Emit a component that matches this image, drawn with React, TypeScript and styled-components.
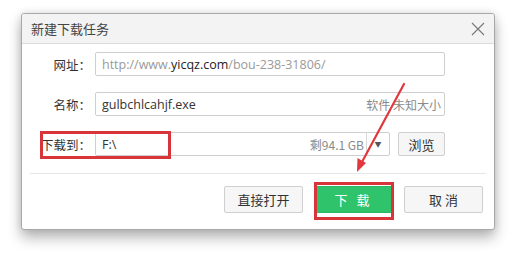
import React from 'react';
import styled, { createGlobalStyle } from 'styled-components';

const GlobalStyle = createGlobalStyle`
  html, body {
    margin: 0;
    padding: 0;
    background: #ffffff;
  }
  body {
    font-family: 'Open Sans', 'Noto Sans CJK SC', sans-serif;
    font-size: 13px;
    color: #333;
  }
`;

const Page = styled.div`
  position: relative;
  width: 515px;
  height: 258px;
  padding: 13px 0 0 21px;
  box-sizing: border-box;
  overflow: hidden;
`;

const Dialog = styled.div`
  width: 474px;
  height: 217px;
  box-sizing: border-box;
  background: #fff;
  border: 1px solid #a8a8a8;
  border-radius: 3px;
  box-shadow: 0 8px 14px rgba(0, 0, 0, 0.28), 0 0 8px rgba(0, 0, 0, 0.12);
  display: flex;
  flex-direction: column;
`;

const Header = styled.div`
  height: 30px;
  box-sizing: border-box;
  background: #f3f3f3;
  border-bottom: 1px solid #dcdcdc;
  border-radius: 3px 3px 0 0;
  display: flex;
  align-items: center;
  justify-content: space-between;
  padding: 0 9px 0 9px;
`;

const Title = styled.span`
  font-family: 'Noto Sans CJK SC', sans-serif;
  font-size: 13px;
  color: #444;
`;

const Close = styled.div`
  width: 14px;
  height: 14px;
  display: flex;
  align-items: center;
  justify-content: center;
`;

const Form = styled.div`
  display: flex;
  flex-direction: column;
  gap: 16px;
  padding-top: 8px;
`;

const Row = styled.div`
  display: flex;
  align-items: center;
  height: 24px;
`;

const Label = styled.div`
  width: 65px;
  margin-right: 8px;
  text-align: right;
  white-space: nowrap;
  font-family: 'Noto Sans CJK SC', sans-serif;
  font-size: 12.5px;
  color: #333;
`;

const Colon = styled.span`
  letter-spacing: -4px;
`;

const Field = styled.div<{ $width: number }>`
  width: ${(p) => p.$width}px;
  height: 24px;
  box-sizing: border-box;
  border: 1px solid #cfcfcf;
  border-radius: 2px;
  display: flex;
  align-items: center;
  padding: 0 3px 0 6px;
  background: #fff;
  font-family: 'Open Sans', 'Noto Sans CJK SC', sans-serif;
  font-size: 12.5px;
  color: #333;
`;

const Grow = styled.span`
  flex: 1;
  white-space: nowrap;
  overflow: hidden;
`;

const Muted = styled.span`
  color: #9a9a9a;
`;

const Dark = styled.span`
  color: #222;
`;

const Hint = styled.span`
  font-family: 'Noto Sans CJK SC', sans-serif;
  font-size: 12px;
  color: #8a8a8a;
  white-space: nowrap;
`;

const Caret = styled.div`
  width: 22px;
  height: 22px;
  margin-left: 2px;
  margin-right: -3px;
  border-left: 1px solid #d8d8d8;
  display: flex;
  align-items: center;
  justify-content: center;
  color: #555;
  font-size: 7px;
`;

const SmallButton = styled.button`
  margin-left: 8px;
  width: 47px;
  height: 24px;
  box-sizing: border-box;
  border: 1px solid #cfcfcf;
  border-radius: 2px;
  background: #f6f6f6;
  font-family: 'Noto Sans CJK SC', sans-serif;
  font-size: 13px;
  color: #333;
  padding: 0;
`;

const Divider = styled.div`
  height: 1px;
  background: #e6e6e6;
  margin: 17px 8px 0 8px;
`;

const Footer = styled.div`
  display: flex;
  justify-content: flex-end;
  gap: 11px;
  padding: 12px 11px 0 0;
`;

const Button = styled.button<{ $primary?: boolean }>`
  width: 79px;
  height: 27px;
  box-sizing: border-box;
  border-radius: 2px;
  border: 1px solid ${(p) => (p.$primary ? '#2bb862' : '#cfcfcf')};
  background: ${(p) => (p.$primary ? '#2fc46b' : '#f6f6f6')};
  color: ${(p) => (p.$primary ? '#fff' : '#333')};
  font-family: 'Noto Sans CJK SC', sans-serif;
  font-size: 13px;
  padding: 0;
  letter-spacing: ${(p) => (p.$primary ? '3px' : '0')};
`;

const Highlight = styled.div<{ $x: number; $y: number; $w: number; $h: number }>`
  position: absolute;
  left: ${(p) => p.$x}px;
  top: ${(p) => p.$y}px;
  width: ${(p) => p.$w}px;
  height: ${(p) => p.$h}px;
  box-sizing: border-box;
  border: 3px solid #d8353b;
  pointer-events: none;
`;

const Overlay = styled.svg`
  position: absolute;
  left: 0;
  top: 0;
  pointer-events: none;
`;

export default function App() {
  return (
    <>
      <GlobalStyle />
      <Page>
        <Dialog>
          <Header>
            <Title>新建下载任务</Title>
            <Close>
              <svg width="14" height="14" viewBox="0 0 14 14">
                <path d="M1 1L13 13M13 1L1 13" stroke="#777" strokeWidth="1.1" />
              </svg>
            </Close>
          </Header>
          <Form>
            <Row>
              <Label>网址<Colon>：</Colon></Label>
              <Field $width={350}>
                <Grow>
                  <Muted>http://www.</Muted>
                  <Dark>yicqz.com</Dark>
                  <Muted>/bou-238-31806/</Muted>
                </Grow>
              </Field>
            </Row>
            <Row>
              <Label>名称<Colon>：</Colon></Label>
              <Field $width={350}>
                <Grow>gulbchlcahjf.exe</Grow>
                <Hint>软件 未知大小</Hint>
              </Field>
            </Row>
            <Row>
              <Label>下载到<Colon>：</Colon></Label>
              <Field $width={295}>
                <Grow>F:\</Grow>
                <Hint>剩94.1 GB</Hint>
                <Caret>▼</Caret>
              </Field>
              <SmallButton>浏览</SmallButton>
            </Row>
          </Form>
          <Divider />
          <Footer>
            <Button>直接打开</Button>
            <Button $primary>下 载</Button>
            <Button>取 消</Button>
          </Footer>
        </Dialog>
        <Highlight $x={40} $y={131} $w={131} $h={28} />
        <Highlight $x={314} $y={182} $w={80} $h={38} />
        <Overlay width="515" height="258" viewBox="0 0 515 258">
          <path d="M404 84 L362 162" stroke="#e0383c" strokeWidth="2.2" strokeLinecap="round" />
          <path d="M357 172 L357.5 158 L366 163 Z" fill="#e0383c" />
        </Overlay>
      </Page>
    </>
  );
}
